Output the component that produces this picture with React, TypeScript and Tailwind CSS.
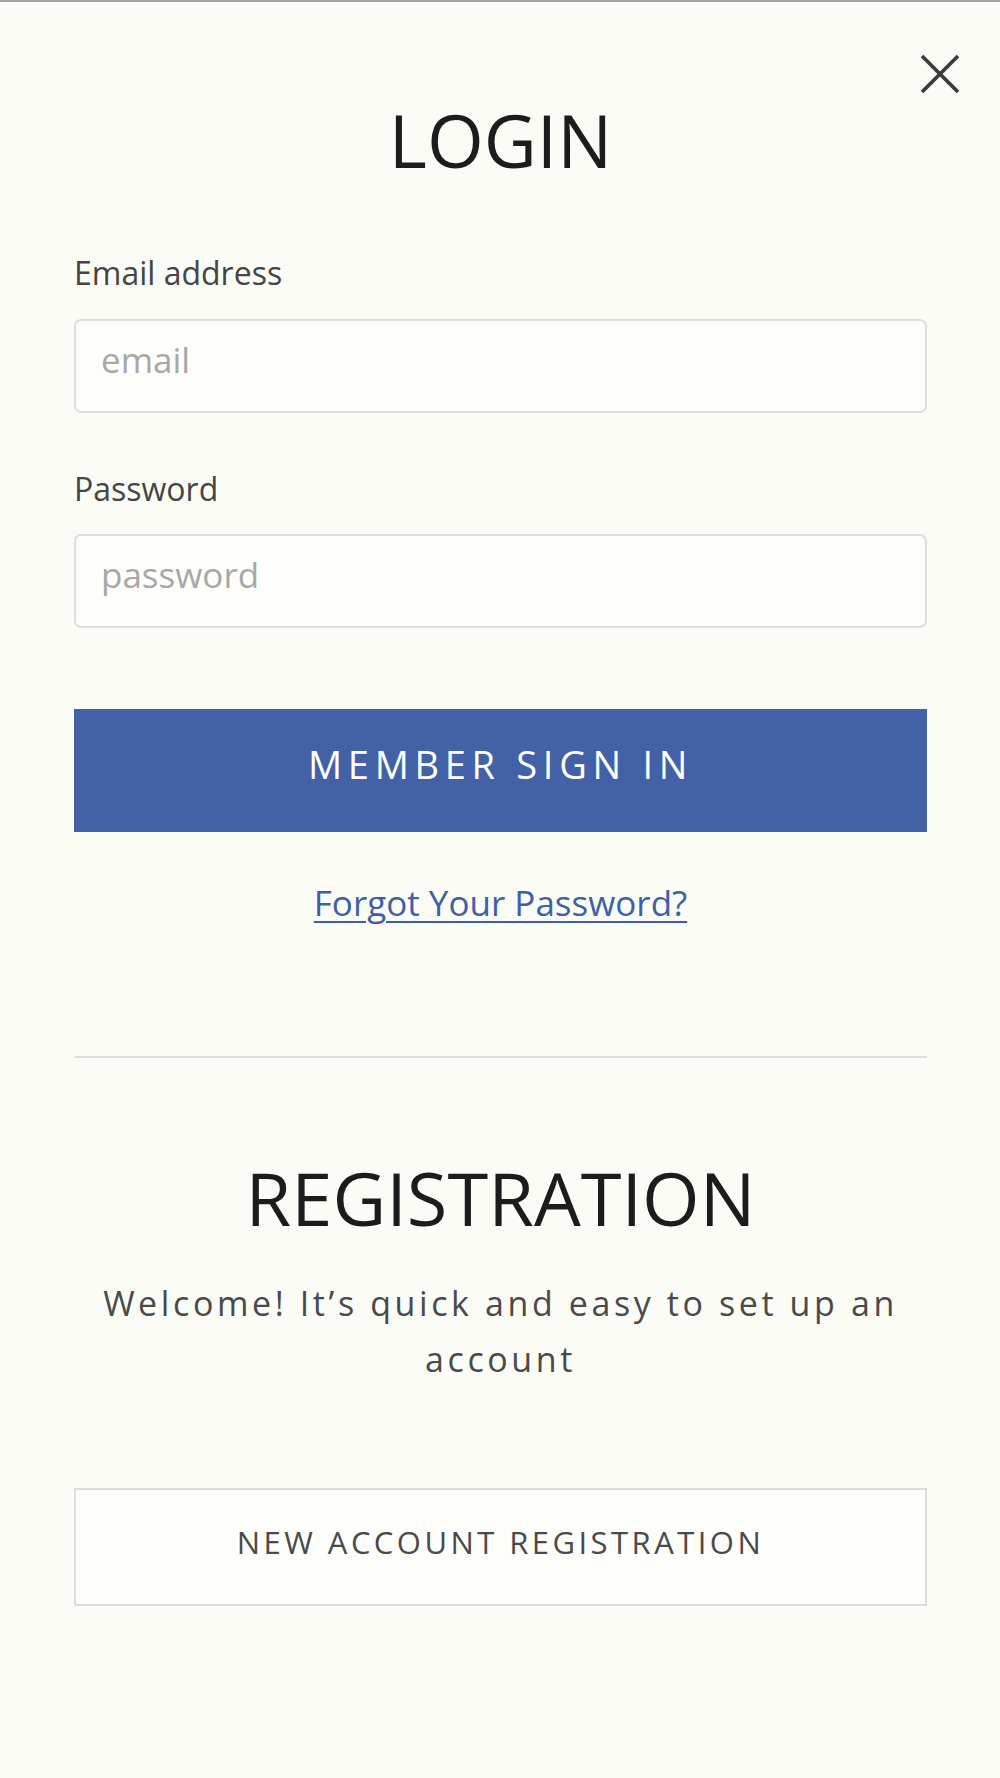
import React from 'react';

const CloseIcon = () => (
  <svg width="40" height="40" viewBox="0 0 40 40" fill="none" stroke="#3b3b3b" strokeWidth="3.8">
    <path d="M2 2 L38 38" />
    <path d="M38 2 L2 38" />
  </svg>
);

export default function App() {
  return (
    <div
      className="relative min-h-[1778px] w-full border-t-2 border-[#a3a3a3] bg-[#fcfcf7] pl-[74px] pr-[73px] pt-[101px]"
      style={{ fontFamily: '"Open Sans", "Liberation Sans", sans-serif' }}
    >
      <button className="absolute right-[40px] top-[52px]" aria-label="Close">
        <CloseIcon />
      </button>

      {/* Login */}
      <h1 className="text-center text-[73px] font-normal leading-none text-[#1c1c1c]">LOGIN</h1>

      <label className="mt-[73px] block text-[32px] leading-[48px] text-[#454545]">Email address</label>
      <input
        type="email"
        placeholder="email"
        className="mt-[22px] block h-[94px] w-full rounded-[7px] border-2 border-[#dedede] bg-[#fdfdf9] pl-[25px] pr-6 pb-[14px] text-[35px] text-[#333] placeholder:text-[#a8a8a8] outline-none"
      />

      <label className="mt-[52px] block text-[32px] leading-[48px] text-[#454545]">Password</label>
      <input
        type="password"
        placeholder="password"
        className="mt-[21px] block h-[94px] w-full rounded-[7px] border-2 border-[#dedede] bg-[#fdfdf9] pl-[25px] pr-6 pb-[14px] text-[35px] text-[#333] placeholder:text-[#a8a8a8] outline-none"
      />

      <button className="mt-[81px] flex h-[123px] w-full items-center justify-center bg-[#4261a6] pb-[12px] text-[38px] tracking-[0.15em] text-white">
        MEMBER SIGN IN
      </button>

      <div className="mt-[45px] text-center text-[35px] leading-[51px]">
        <a href="#" className="text-[#3f5fa8] underline decoration-2 underline-offset-[5px]">
          Forgot Your Password?
        </a>
      </div>

      <div className="mt-[128px] h-[2px] w-full bg-[#dedede]" />

      {/* Registration */}
      <h2 className="mt-[103px] text-center text-[74px] font-normal leading-none text-[#1c1c1c]">REGISTRATION</h2>

      <p className="mt-[40px] text-center text-[34px] leading-[56px] tracking-[3.6px] text-[#4a4a4a]">
        Welcome! It’s quick and easy to set up an account
      </p>

      <button className="mt-[101px] flex h-[118px] w-full items-center justify-center border-2 border-[#dcdcdc] bg-[#fdfdfa] pb-[10px] text-[31px] tracking-[3.45px] text-[#4a4a4a]">
        NEW ACCOUNT REGISTRATION
      </button>
    </div>
  );
}
